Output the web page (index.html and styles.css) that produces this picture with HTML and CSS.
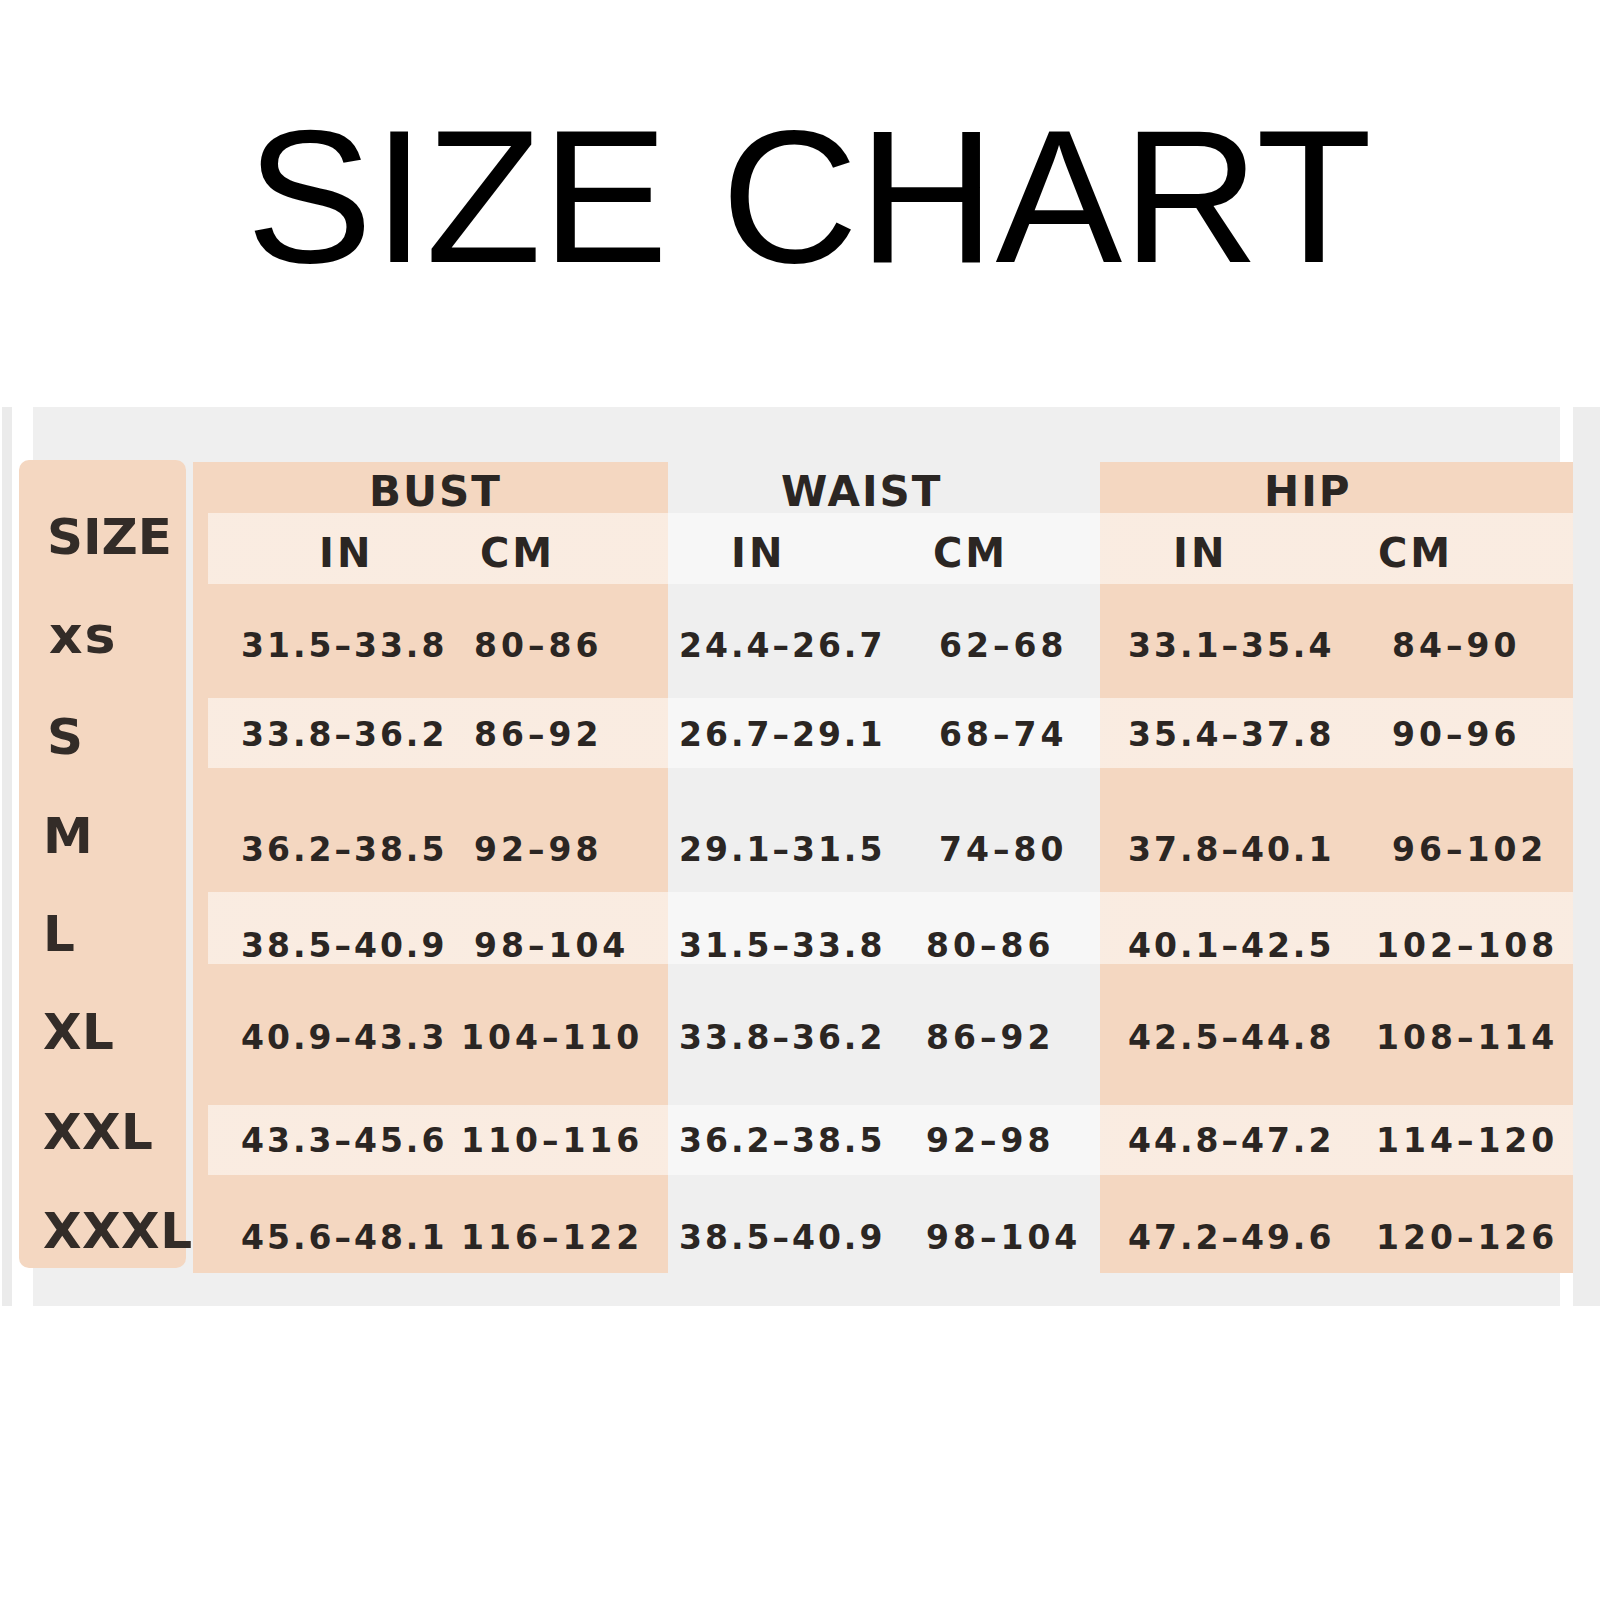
FILE: index.html
```html
<!DOCTYPE html>
<html lang="en">
<head>
<meta charset="utf-8">
<title>Size Chart</title>
<link rel="stylesheet" href="styles.css">
</head>
<body>
<h1 class="title">SIZE CHART</h1>
<section class="sheet">
  <div class="chart">
    <div class="size-col">
      <div class="lab lab-head">SIZE</div>
      <div class="lab lab-xs">xs</div>
      <div class="lab lab-s">S</div>
      <div class="lab lab-m">M</div>
      <div class="lab lab-l">L</div>
      <div class="lab lab-xl">XL</div>
      <div class="lab lab-xxl">XXL</div>
      <div class="lab lab-xxxl">XXXL</div>
    </div>
    <div class="table">
      <div class="row row-head">
        <div class="h h-bust">BUST</div>
        <div class="h h-waist">WAIST</div>
        <div class="h h-hip">HIP</div>
      </div>
      <div class="row row-sub stripe">
        <div class="u u-bi">IN</div>
        <div class="u u-bc">CM</div>
        <div class="u u-wi">IN</div>
        <div class="u u-wc">CM</div>
        <div class="u u-hi">IN</div>
        <div class="u u-hc">CM</div>
      </div>
      <div class="row row-xs">
        <div class="c c-bi">31.5–33.8</div>
        <div class="c c-bc">80–86</div>
        <div class="c c-wi">24.4–26.7</div>
        <div class="c c-wc">62–68</div>
        <div class="c c-hi">33.1–35.4</div>
        <div class="c c-hc">84–90</div>
      </div>
      <div class="row row-s stripe">
        <div class="c c-bi">33.8–36.2</div>
        <div class="c c-bc">86–92</div>
        <div class="c c-wi">26.7–29.1</div>
        <div class="c c-wc">68–74</div>
        <div class="c c-hi">35.4–37.8</div>
        <div class="c c-hc">90–96</div>
      </div>
      <div class="row row-m">
        <div class="c c-bi">36.2–38.5</div>
        <div class="c c-bc">92–98</div>
        <div class="c c-wi">29.1–31.5</div>
        <div class="c c-wc">74–80</div>
        <div class="c c-hi">37.8–40.1</div>
        <div class="c c-hc">96–102</div>
      </div>
      <div class="row row-l stripe">
        <div class="c c-bi">38.5–40.9</div>
        <div class="c c-bc">98–104</div>
        <div class="c c-wi">31.5–33.8</div>
        <div class="c c-wc lft">80–86</div>
        <div class="c c-hi">40.1–42.5</div>
        <div class="c c-hc lft">102–108</div>
      </div>
      <div class="row row-xl">
        <div class="c c-bi">40.9–43.3</div>
        <div class="c c-bc lft">104–110</div>
        <div class="c c-wi">33.8–36.2</div>
        <div class="c c-wc lft">86–92</div>
        <div class="c c-hi">42.5–44.8</div>
        <div class="c c-hc lft">108–114</div>
      </div>
      <div class="row row-xxl stripe">
        <div class="c c-bi">43.3–45.6</div>
        <div class="c c-bc lft">110–116</div>
        <div class="c c-wi">36.2–38.5</div>
        <div class="c c-wc lft">92–98</div>
        <div class="c c-hi">44.8–47.2</div>
        <div class="c c-hc lft">114–120</div>
      </div>
      <div class="row row-xxxl">
        <div class="c c-bi">45.6–48.1</div>
        <div class="c c-bc lft">116–122</div>
        <div class="c c-wi">38.5–40.9</div>
        <div class="c c-wc lft">98–104</div>
        <div class="c c-hi">47.2–49.6</div>
        <div class="c c-hc lft">120–126</div>
      </div>
    </div>
  </div>
</section>
</body>
</html>
```

FILE: styles.css
```css
* { box-sizing: border-box; }

html, body {
  margin: 0;
  padding: 0;
  background: #ffffff;
}

body {
  width: 1600px;
  min-height: 1600px;
  font-family: "DejaVu Sans", "Liberation Sans", sans-serif;
  color: #2e2926;
}

.title {
  margin: 0;
  padding: 101px 0 0 18px;
  height: 407px;
  font-family: "Liberation Sans", Arial, sans-serif;
  font-weight: 400;
  font-size: 190px;
  line-height: 190px;
  color: #000000;
  text-align: center;
  white-space: nowrap;
}

.sheet {
  height: 899px;
  padding: 53px 0 0 19px;
  background: linear-gradient(to right,
    #ffffff 0 2px,
    #ebebeb 2px 12px,
    #ffffff 12px 33px,
    #efefef 33px 1560px,
    #ffffff 1560px 1573px,
    #ededed 1573px 1600px);
}

.chart {
  display: flex;
  align-items: flex-start;
  gap: 7px;
}

/* size column */
.size-col {
  width: 167px;
  height: 808px;
  flex: none;
  background: #f4d7c1;
  border-radius: 10px;
  display: flex;
  flex-direction: column;
}

.lab {
  font-weight: 700;
  font-size: 50px;
  line-height: 50px;
  padding-left: 24px;
  white-space: nowrap;
  color: #332c28;
  letter-spacing: 0.5px;
}

.lab-head { height: 124px; padding-top: 52px; padding-left: 28px; letter-spacing: 0; }
.lab-xs   { height: 114px; padding-top: 26px; padding-left: 30px; letter-spacing: 2px; font-size: 52px; }
.lab-s    { height: 70px;  padding-top: 14px; padding-left: 28px; }
.lab-m    { height: 124px; padding-top: 43px; }
.lab-l    { height: 72px;  padding-top: 17px; }
.lab-xl   { height: 141px; padding-top: 43px; }
.lab-xxl  { height: 70px;  padding-top: 2px; }
.lab-xxxl { height: 93px;  padding-top: 31px; }

/* main table */
.table {
  width: 1380px;
  flex: none;
  margin-top: 2px;
  display: flex;
  flex-direction: column;
  background: linear-gradient(to right,
    #f4d7c1 0 475px,
    transparent 475px 907px,
    #f4d7c1 907px 1380px);
}

.row {
  display: grid;
  grid-template-columns: 268px 207px 243px 189px 240px 233px;
  font-weight: 700;
  white-space: nowrap;
}

.stripe {
  background: linear-gradient(to right,
    transparent 0 15px,
    rgba(255, 255, 255, 0.52) 15px 100%);
}

.row-head { height: 51px; padding-top: 9px; }
.row-sub  { height: 71px; padding-top: 20px; }
.row-xs   { height: 114px; padding-top: 45px; }
.row-s    { height: 70px; padding-top: 20px; }
.row-m    { height: 124px; padding-top: 65px; }
.row-l    { height: 72px; padding-top: 37px; }
.row-xl   { height: 141px; padding-top: 57px; }
.row-xxl  { height: 70px; padding-top: 19px; }
.row-xxxl { height: 98px; padding-top: 46px; }

/* group headers */
.h {
  font-size: 42px;
  line-height: 42px;
  letter-spacing: 2px;
  color: #2b2623;
}
.h-bust  { grid-column: 1 / 3; padding-left: 176px; }
.h-waist { grid-column: 3 / 5; padding-left: 113px; }
.h-hip   { grid-column: 5 / 7; padding-left: 164px; }

/* unit headers */
.u {
  font-size: 40px;
  line-height: 40px;
  letter-spacing: 3px;
  color: #2b2623;
}
.u-bi { padding-left: 126px; }
.u-bc { padding-left: 19px; }
.u-wi { padding-left: 63px; }
.u-wc { padding-left: 22px; }
.u-hi { padding-left: 73px; }
.u-hc { padding-left: 38px; }

/* data cells */
.c {
  font-size: 33px;
  line-height: 33px;
  letter-spacing: 3px;
  color: #2b2623;
}
.c-bc, .c-wc, .c-hc { letter-spacing: 4px; }

.c-bi { padding-left: 48px; }
.c-bc { padding-left: 13px; }
.c-wi { padding-left: 11px; }
.c-wc { padding-left: 28px; }
.c-hi { padding-left: 28px; }
.c-hc { padding-left: 52px; }

.c-bc.lft { padding-left: 0; }
.c-wc.lft { padding-left: 15px; }
.c-hc.lft { padding-left: 36px; }
```
